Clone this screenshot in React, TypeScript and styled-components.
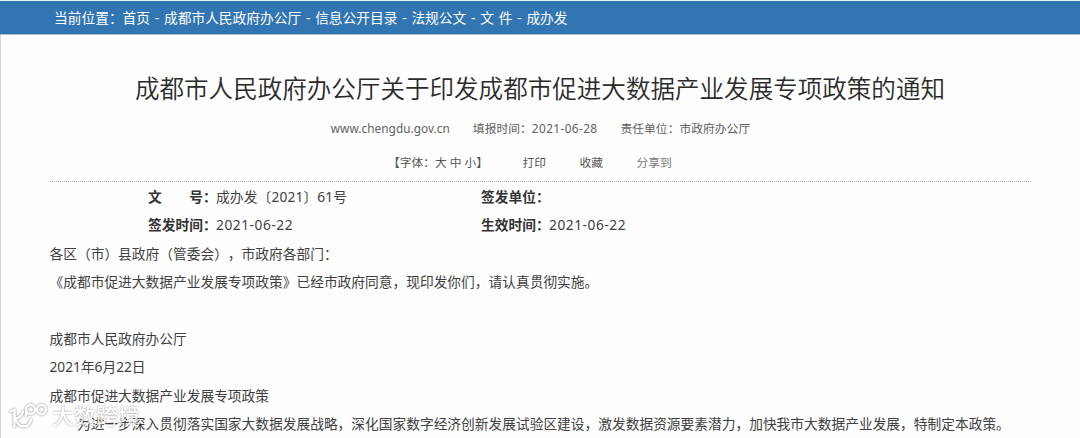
import styled, { createGlobalStyle } from "styled-components";

const breadcrumbs = [
  "首页",
  "成都市人民政府办公厅",
  "信息公开目录",
  "法规公文",
  "文 件",
  "成办发",
];

const paragraphs = [
  { text: "各区（市）县政府（管委会），市政府各部门：" },
  {
    text: "《成都市促进大数据产业发展专项政策》已经市政府同意，现印发你们，请认真贯彻实施。",
  },
  { text: "" },
  { text: "成都市人民政府办公厅" },
  { text: "2021年6月22日" },
  { text: "成都市促进大数据产业发展专项政策" },
  {
    text: "为进一步深入贯彻落实国家大数据发展战略，深化国家数字经济创新发展试验区建设，激发数据资源要素潜力，加快我市大数据产业发展，特制定本政策。",
    indent: true,
  },
];

/* ─── COMPONENT ───────────────────────────────────────────────────── */

export default function App() {
  return (
    <Page>
      <GlobalStyle />
      <Breadcrumb>
        当前位置：
        {breadcrumbs.join(" - ")}
      </Breadcrumb>
      <Article>
        <Title>成都市人民政府办公厅关于印发成都市促进大数据产业发展专项政策的通知</Title>
        <Meta>
          <Site>www.chengdu.gov.cn</Site>
          <span>
            填报时间：<MetaDate>2021-06-28</MetaDate>
          </span>
          <span>责任单位：市政府办公厅</span>
        </Meta>
        <Tools>
          <FontSizes>【字体：大 中 小】</FontSizes>
          <Tool>打印</Tool>
          <Tool>收藏</Tool>
          <Share>分享到</Share>
        </Tools>
        <Fields>
          <Field>
            <Label>文　　号：</Label>
            <DocNumber>成办发〔2021〕61号</DocNumber>
          </Field>
          <Field>
            <Label>签发单位：</Label>
          </Field>
          <Field>
            <Label>签发时间：</Label>
            <FieldDate>2021-06-22</FieldDate>
          </Field>
          <Field>
            <Label>生效时间：</Label>
            <FieldDate>2021-06-22</FieldDate>
          </Field>
        </Fields>
        {paragraphs.map(({ text, indent }, i) => (
          <Paragraph key={i} $indent={indent}>
            {text}
          </Paragraph>
        ))}
      </Article>
      <Watermark>
        <WatermarkLogo />
        大数跨境
      </Watermark>
    </Page>
  );
}

function WatermarkLogo() {
  return (
    <LogoSvg viewBox="0 0 40 30" fill="none">
      <path d="M2.500 11.500L6.500 9.500V26.500" />
      <path d="M15 11.500C14 15.500 11.500 18 7.500 18.500C9 24 11.500 26.500 15.500 26.500C19.500 26.500 22 24 23 20" />
      <path d="M18 15.500V9.500" />
      <circle cx="22.500" cy="9.500" r="4.500" />
      <circle cx="33.500" cy="9.500" r="4.500" />
    </LogoSvg>
  );
}

/* ─── STYLED COMPONENTS ───────────────────────────────────────────── */

const GlobalStyle = createGlobalStyle`
  body {
    margin: 0;
    background: #fefefe;
    overflow: hidden;
  }
`;

const Page = styled.div`
  position: relative;
  box-sizing: border-box;
  height: 438px;
  overflow: hidden;
  border-top: 1px solid #e3f6fb;
  background: #fefefe;
  color: #404040;
  font-family: "Noto Sans", "Noto Sans CJK SC", sans-serif;
  font-size: 13.73px;
  text-spacing-trim: space-all;
  white-space: nowrap;
`;

const Breadcrumb = styled.nav`
  box-sizing: border-box;
  height: 34px;
  padding-left: 54px;
  border-bottom: 1px solid #a9bdd6;
  background: #3275b3;
  color: #fff;
  line-height: 33px;
  word-spacing: 1.2px;
`;

const Article = styled.main`
  box-sizing: border-box;
  height: 403px;
  padding: 32px 49px 0;
  border-left: 1px solid #d5d5d5;
`;

const Title = styled.h1`
  margin: 0 0 0 -1px;
  color: #2b2b2b;
  font-size: 24.55px;
  font-weight: 350;
  line-height: 44px;
  text-align: center;
`;

const Meta = styled.div`
  display: flex;
  justify-content: center;
  gap: 23px;
  color: #606060;
  font-size: 11.8px;
  line-height: 34px;
`;

const Site = styled.span`
  letter-spacing: 0.05px;
`;

const MetaDate = styled.span`
  letter-spacing: 0.4px;
`;

const Tools = styled.div`
  display: flex;
  box-sizing: border-box;
  height: 37px;
  padding-left: 338px;
  border-bottom: 1px dotted #aaa;
  color: #555;
  font-size: 11.75px;
  line-height: 34px;
`;

const FontSizes = styled.span`
  width: 134.5px;
`;

const Tool = styled.span`
  width: 57px;
`;

const Share = styled.span`
  color: #777;
`;

const Fields = styled.div`
  display: grid;
  grid-template-columns: 333px 1fr;
  grid-auto-rows: 28.4px;
  padding: 1px 0 0 98px;
  line-height: 28.4px;
`;

const Field = styled.div`
  display: flex;
`;

const Label = styled.b`
  width: 68px;
  color: #333;
`;

const DocNumber = styled.span`
  letter-spacing: 0.15px;
`;

const FieldDate = styled.span`
  letter-spacing: 0.55px;
`;

const Paragraph = styled.p<{ $indent?: boolean }>`
  height: 28.4px;
  margin: 0 0 0 -0.5px;
  line-height: 28.4px;
  text-indent: ${({ $indent }) => ($indent ? "2em" : "0")};
`;

/* Semi-transparent brand mark laid over the last lines of the article */
const Watermark = styled.div`
  position: absolute;
  left: 8px;
  top: 399px;
  display: flex;
  align-items: center;
  gap: 4px;
  color: #fff;
  font-size: 22px;
  font-weight: 500;
  line-height: 30px;
  text-shadow: 0 0 2px rgba(0, 0, 0, 0.6);
  opacity: 0.75;
`;

const LogoSvg = styled.svg`
  width: 40px;
  height: 30px;
  stroke: #fff;
  stroke-width: 2.4;
  stroke-linecap: round;
  stroke-linejoin: round;
  filter: drop-shadow(0 0 1.2px rgba(0, 0, 0, 0.65));
`;
